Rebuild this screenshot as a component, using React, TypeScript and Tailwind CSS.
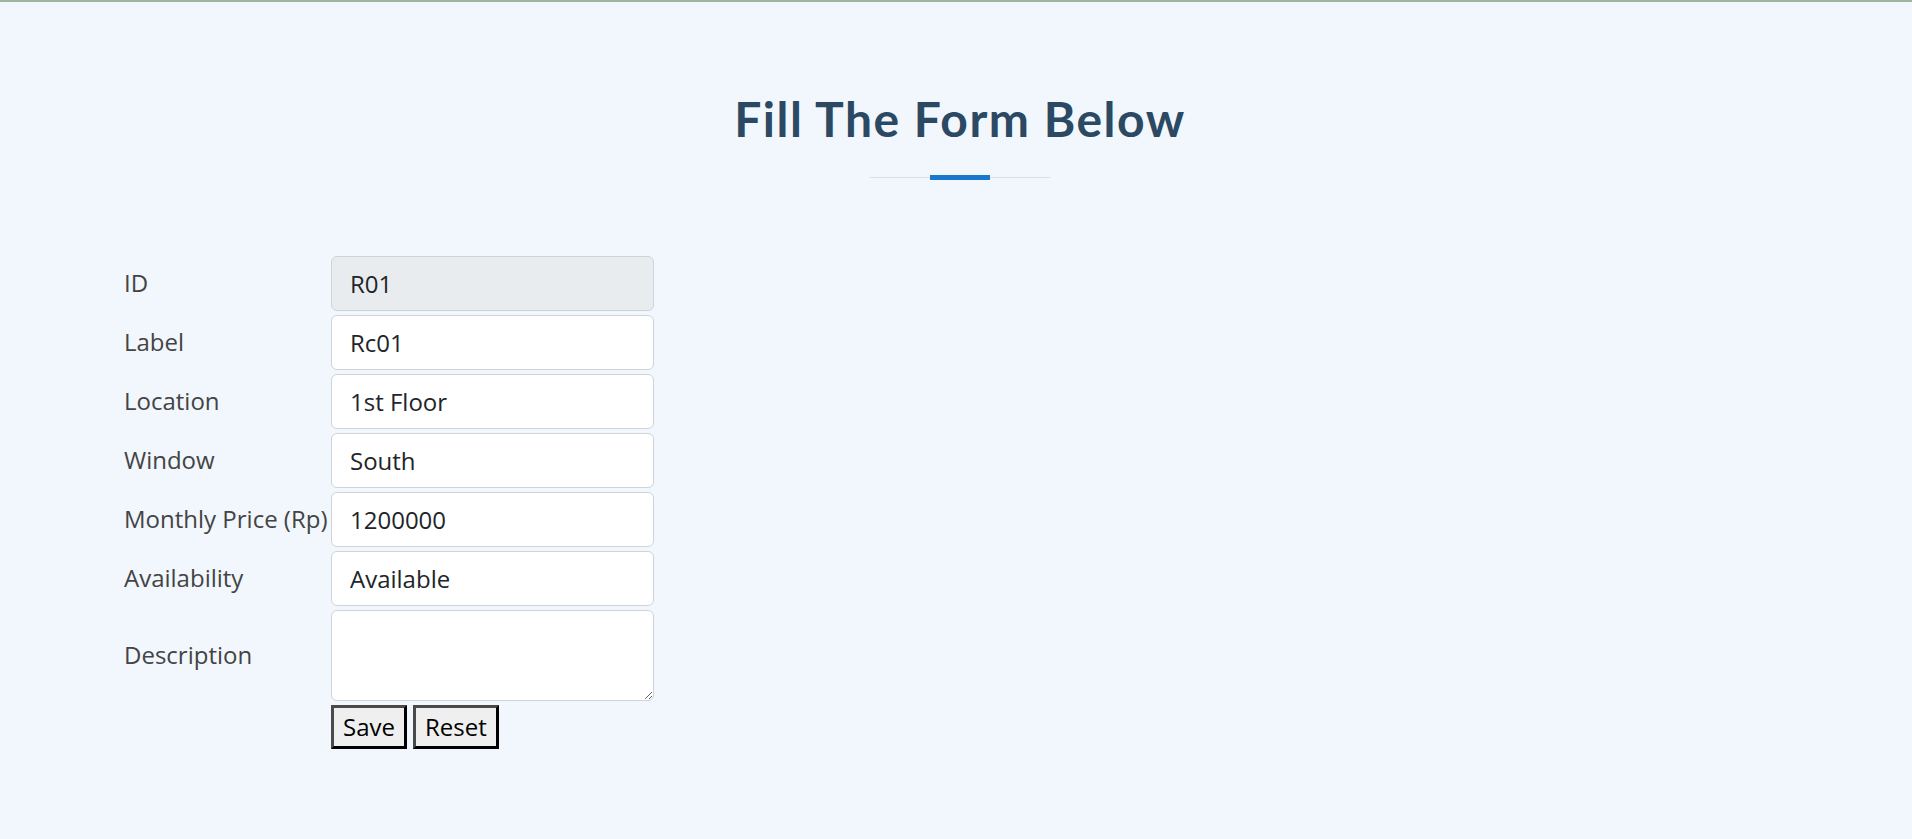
import React from "react";

const inputCls =
  "block h-[55px] w-[323px] rounded-[6px] border border-[#ced4da] px-[18px] text-[24px] leading-[36px] text-[#212529] outline-none";

const rows: { label: string; value: string; disabled?: boolean }[] = [
  { label: "ID", value: "R01", disabled: true },
  { label: "Label", value: "Rc01" },
  { label: "Location", value: "1st Floor" },
  { label: "Window", value: "South" },
  { label: "Monthly Price (Rp)", value: "1200000" },
  { label: "Availability", value: "Available" },
];

const btnCls =
  "inline-block h-[44px] border-[3px] border-solid border-t-[#4a4a4a] border-l-[#4a4a4a] border-b-black border-r-black bg-[#efefef] px-[9px] text-[24px] leading-[36px] text-black";

const labelCls = "p-[1px] align-middle text-[24px] leading-[36px] whitespace-nowrap overflow-visible";

export default function App() {
  return (
    <div
      className="min-h-screen border-t-2 border-[#9db59d] bg-[#f1f7fd] text-[#444444]"
      style={{ fontFamily: '"Open Sans", "Liberation Sans", sans-serif' }}
    >
      <section className="pt-[88px] pb-[90px]">
        <div className="flex justify-center pl-[8px]">
          <h2
            className="relative pb-[32px] text-center text-[48px] font-bold leading-[57.6px] tracking-[1.5px] text-[#2c4964]"
            style={{ fontFamily: 'Lato, "Open Sans", sans-serif' }}
          >
            Fill The Form Below
            <span className="absolute bottom-[2px] left-1/2 h-px w-[180px] -translate-x-1/2 bg-[#dddddd]" />
            <span className="absolute bottom-0 left-1/2 h-[5px] w-[60px] -translate-x-1/2 bg-[#1977cc]" />
          </h2>
        </div>
        <div className="mt-[73px] pl-[121px]">
          <table className="w-[536px] table-fixed border-separate border-spacing-[2px]">
            <colgroup>
              <col className="w-[205px]" />
              <col className="w-[325px]" />
            </colgroup>
            <tbody>
              {rows.map((r) => (
                <tr key={r.label}>
                  <td className={labelCls}>{r.label}</td>
                  <td className="p-[1px] align-middle">
                    <input
                      className={`${inputCls} ${r.disabled ? "bg-[#e9ecef]" : "bg-white"}`}
                      defaultValue={r.value}
                      disabled={r.disabled}
                      readOnly={!r.disabled}
                    />
                  </td>
                </tr>
              ))}
              <tr>
                <td className={labelCls}>Description</td>
                <td className="p-[1px] align-middle">
                  <textarea
                    className="block h-[91px] w-[323px] rounded-[6px] border border-[#ced4da] bg-white px-[18px] py-[9px] text-[24px] leading-[36px] text-[#212529] outline-none"
                    rows={2}
                    defaultValue=""
                  />
                </td>
              </tr>
              <tr>
                <td className="p-[1px]" />
                <td className="p-[1px]">
                  <div className="flex gap-[6px]">
                    <button className={btnCls}>Save</button>
                    <button className={btnCls}>Reset</button>
                  </div>
                </td>
              </tr>
            </tbody>
          </table>
        </div>
      </section>
    </div>
  );
}
